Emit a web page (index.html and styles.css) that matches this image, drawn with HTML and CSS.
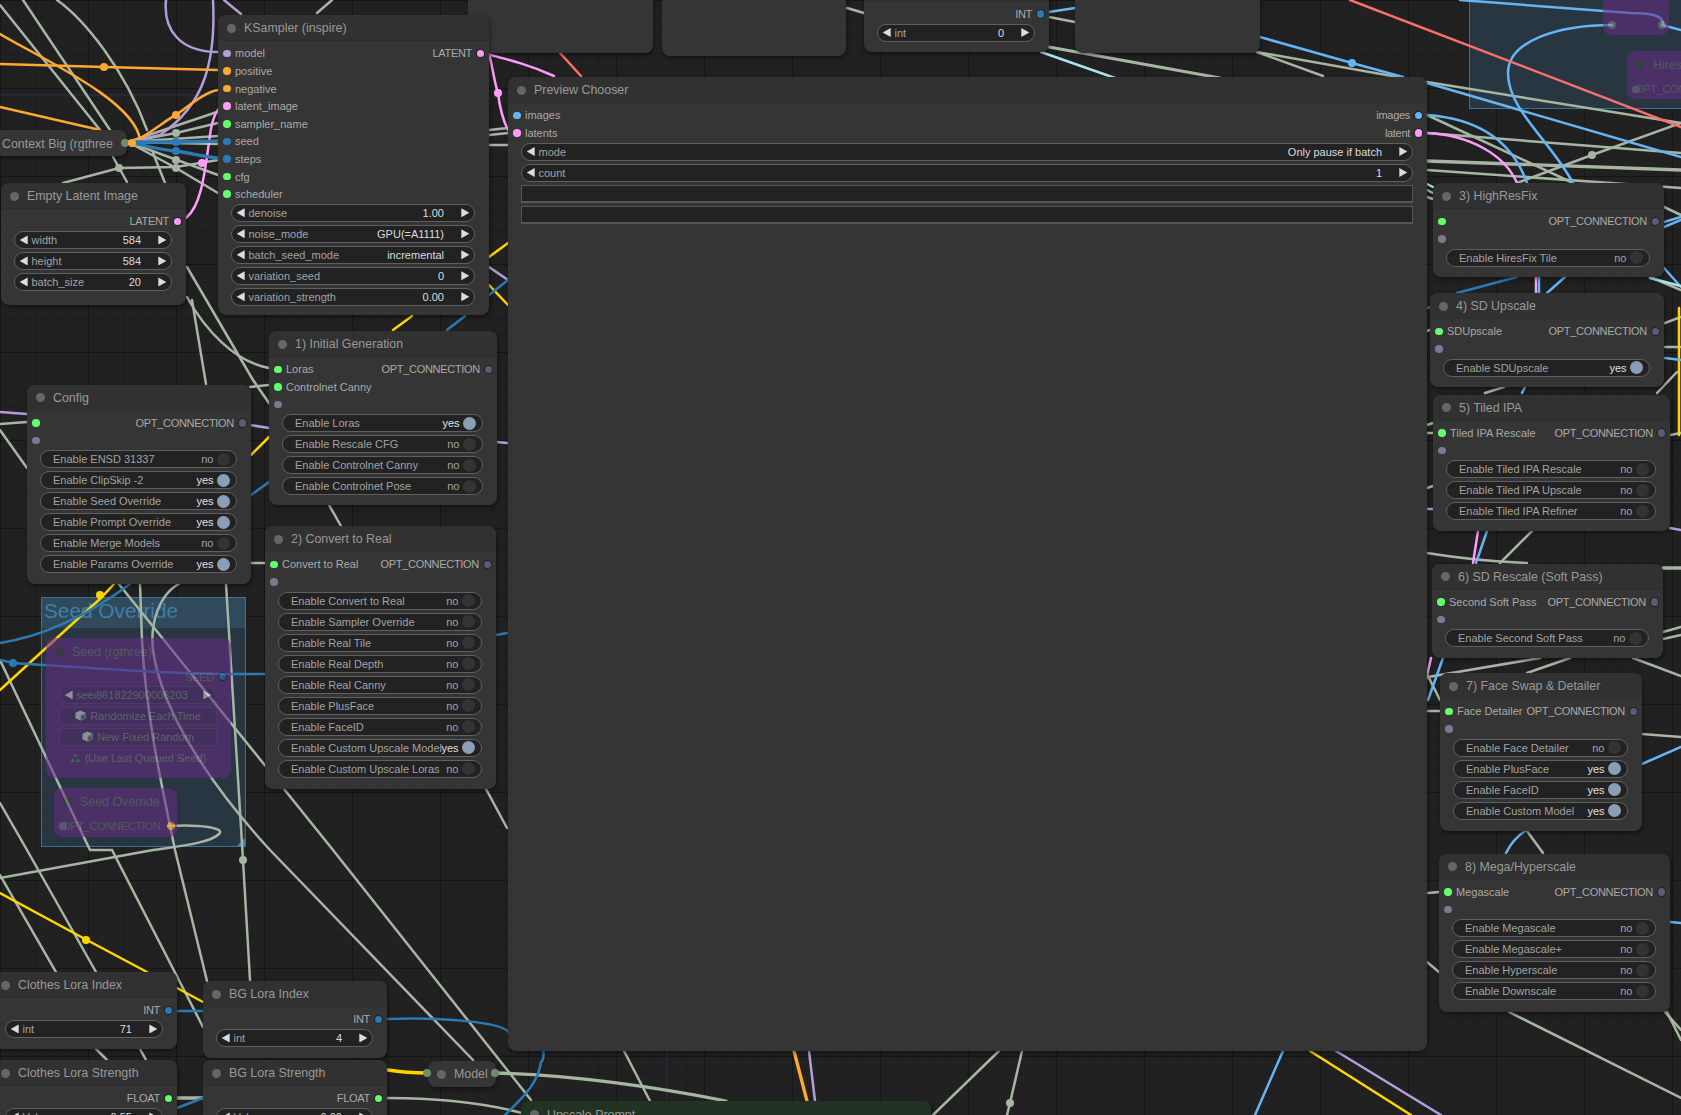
FILE: index.html
```html
<!DOCTYPE html>
<html lang="en">
<head>
<meta charset="utf-8">
<title>ComfyUI workflow</title>
<link rel="stylesheet" href="styles.css">
</head>
<body>
<main class="canvas">

<div class="group g-seed"><div class="group-title">Seed Override</div><span class="corner"></span></div>
<div class="group g-hires"></div>

<svg class="wires" width="1681" height="1115" viewBox="0 0 1681 1115">
  <g class="w navy">
    <path d="M0,95 L218,95"/>
    <path d="M667,1051 L667,1100"/>
  </g>
  <g class="w sage">
    <path d="M0,5 L100,130"/><path d="M23,0 L110,130"/><path d="M57,0 C85,20 125,70 147,130"/>
    <path d="M113,157 L127,182"/><path d="M153,153 L165,183"/>
    <path d="M128,142 L217,112"/><path d="M128,142 L176,133 L218,123"/><path d="M128,142 L218,136"/>
    <path d="M128,142 L218,144"/><path d="M128,142 L177,160 L218,175"/><path d="M128,142 L176,168 L218,193"/>
    <path d="M63,183 L119,168 L176,167 L218,160"/>
    <path d="M317,13 L332,0"/>
    <path d="M489,130 L508,128"/><path d="M489,135 L508,133"/><path d="M489,145 L508,145"/>
    <path d="M187,267 L253,380 L269,403"/><path d="M187,297 C205,330 235,362 269,368"/><path d="M192,300 L206,384"/>
    <path d="M250,387 L269,385"/>
    <path d="M0,424 L27,422"/><path d="M0,430 L27,468"/>
    <path d="M251,563 L265,563"/><path d="M329,505 L341,526"/><path d="M486,789 L507,828"/>
    <path d="M118,583 L284,789 L333,850 L531,1100"/>
    <path d="M140,584 L142,640 C146,720 165,800 175,850 L207,981"/>
    <path d="M180,583 C158,595 150,625 153,650 C162,715 215,790 270,850 L473,1060"/>
    <path d="M226,584 L243,860 L250,980"/>
    <path d="M0,660 L90,850 L112,850 L203,1027"/>
    <path d="M0,803 L27,850 L96,972"/>
    <path d="M168,826 C200,824 226,828 219,834 C210,843 180,846 153,850 L0,878"/>
    <path d="M0,875 L56,972"/>
    <path d="M96,1049 L107,1060"/><path d="M140,1049 L146,1060"/>
    <path d="M177,1098 L203,1098" class="thick"/>
    <path d="M387,1098 C430,1098 480,1102 522,1113"/>
    <path d="M496,1073 C560,1075 640,1084 726,1101" class="thick"/>
    <path d="M624,1051 L650,1101"/>
    <path d="M999,1051 L933,1115"/>
    <path d="M1022,1051 L1010,1103 L1007,1115"/>
    <path d="M1509,1012 L1681,1098"/><path d="M1667,1012 L1681,1040"/>
    <path d="M847,8 L864,13"/><path d="M1049,17 L1075,22"/>
    <path d="M1049,47 L1220,78" class="thick"/>
    <path d="M1257,52 L1323,76"/><path d="M1257,52 L1403,78"/>
    <path d="M1427,82 L1681,123"/>
    <path d="M1427,115 L1573,183"/>
    <path d="M1427,133 L1681,153"/>
    <path d="M1427,161 L1681,170" class="thick"/>
    <path d="M1427,170 L1681,188"/>
    <path d="M1517,183 L1592,155 L1681,123"/>
    <path d="M1664,207 L1681,215"/><path d="M1665,323 L1681,317"/><path d="M1665,347 L1681,347"/>
    <path d="M1657,393 L1677,372"/><path d="M1485,393 L1504,387"/>
    <path d="M1427,190 L1433,193"/><path d="M1427,197 L1433,199"/>
    <path d="M1427,331 L1430,330"/>
    <path d="M1427,425 L1433,423"/><path d="M1427,433 L1433,433"/><path d="M1427,488 L1433,486"/>
    <path d="M1532,531 L1500,563"/>
    <path d="M1427,553 C1470,560 1500,562 1527,563"/>
    <path d="M1663,568 L1681,568" class="thick"/>
    <path d="M1663,632 L1681,627"/><path d="M1663,639 L1681,635"/>
    <path d="M1633,658 L1681,676"/>
    <path d="M1428,677 L1540,658"/><path d="M1527,673 L1570,658"/>
    <path d="M1428,676 L1440,700"/><path d="M1428,711 L1440,711"/>
    <path d="M1642,734 L1681,737"/>
    <path d="M1527,831 L1543,853"/>
    <path d="M1428,893 L1439,892"/><path d="M1427,962 L1439,972"/>
    <path d="M1665,1012 L1681,1030"/>
    <path d="M1670,435 L1681,433"/>
    <path d="M1650,277 L1681,290"/>
  </g>
  <g class="w purple">
    <path d="M166,0 C163,30 180,52 218,52"/>
    <path d="M213,0 C216,60 205,105 160,135 L130,142"/>
    <path d="M224,0 L241,14"/>
    <path d="M489,267 L508,280"/>
    <path d="M0,412 L27,414"/><path d="M250,425 L269,428"/><path d="M497,442 L507,443"/>
    <path d="M1427,509 L1433,509"/><path d="M1670,528 L1681,530"/>
    <path d="M809,1051 L815,1101"/>
    <path d="M1336,1051 L1441,1115"/>
  </g>
  <g class="w orange">
    <path d="M0,64 L104,67 L218,70"/>
    <path d="M0,34 C40,58 135,100 140,140"/>
    <path d="M0,107 L100,130"/>
    <path d="M132,142 C150,135 165,120 176,115 C190,105 205,92 218,90"/>
    <path d="M794,1051 L807,1101" class="thick"/>
  </g>
  <g class="w pink">
    <path d="M186,218 C202,205 205,170 210,135 C212,120 216,110 222,106"/>
    <path d="M483,53 C510,60 530,65 554,76"/>
    <path d="M489,53 C493,70 495,85 498,93 C500,110 503,120 508,130"/>
    <path d="M1427,133 C1470,135 1505,155 1517,183"/>
    <path d="M1536,277 L1536,293"/>
    <path d="M1478,531 L1473,563"/>
    <path d="M1431,658 L1426,680"/>
  </g>
  <g class="w yellow">
    <path d="M0,690 L82,615 L100,599 L114,584"/>
    <path d="M489,257 L508,243"/><path d="M489,285 L508,305"/>
    <path d="M393,330 L412,316"/><path d="M251,455 L269,437"/>
    <path d="M0,893 L85,939 L147,972"/><path d="M177,988 L203,1002"/>
    <path d="M388,1070 C400,1072 410,1073 428,1073" class="thick"/>
    <path d="M1310,1051 L1411,1115"/>
    <path d="M1679,308 L1679,435"/>
  </g>
  <g class="w blue">
    <path d="M130,142 L176,142 L218,141" class="thick"/>
    <path d="M130,142 C145,146 160,150 176,151 C190,153 205,157 218,158" class="thick"/>
    <path d="M489,295 L508,280"/><path d="M447,330 L465,316"/>
    <path d="M251,495 L269,482"/>
    <path d="M0,643 C50,635 95,610 130,584"/>
    <path d="M0,660 L13,663 C90,668 170,675 265,674"/>
    <path d="M177,1011 L203,1011"/>
    <path d="M388,1019 C440,1017 505,1022 509,1033"/>
    <path d="M509,1033 C550,1030 545,1060 541,1062 C538,1085 520,1100 505,1115"/>
    <path d="M177,1108 L203,1098"/>
    <path d="M496,635 L507,633"/>
    <path d="M1457,293 L1517,277"/><path d="M1427,308 L1431,307"/>
  </g>
  <g class="w sky">
    <path d="M1260,37 L1352,63 L1403,77"/>
    <path d="M1427,83 L1681,157"/>
    <path d="M1460,0 L1630,13 C1650,13 1664,15 1663,25"/>
    <path d="M1612,25 C1560,25 1508,40 1508,73 C1508,110 1550,140 1573,183"/>
    <path d="M1662,25 L1681,30"/>
    <path d="M1427,115 C1470,118 1510,135 1527,183"/>
    <path d="M1539,277 L1539,293"/><path d="M1547,293 L1565,277"/>
    <path d="M1522,393 L1525,387"/>
    <path d="M1487,531 L1476,563"/>
    <path d="M1443,658 L1428,700"/>
    <path d="M1664,227 L1681,220"/><path d="M1664,222 L1681,217"/>
    <path d="M1664,268 L1681,287"/><path d="M1665,358 L1681,360"/>
    <path d="M1642,764 L1681,747"/>
    <path d="M1506,853 C1510,845 1516,837 1525,831"/>
    <path d="M1670,922 L1681,923"/>
    <path d="M1283,1051 L1255,1115"/>
    <path d="M1049,12 L1075,8"/>
  </g>
  <g class="w cyan">
    <path d="M1041,52 L1115,78"/>
    <path d="M1427,184 L1433,187"/>
    <path d="M1650,278 L1681,286"/>
  </g>
  <g class="w red">
    <path d="M560,53 L581,76"/>
    <path d="M1350,0 L1681,127"/>
  </g>
  <g class="pts sage-f">
    <circle cx="176" cy="133" r="4"/><circle cx="176" cy="160" r="4"/><circle cx="176" cy="168" r="4"/><circle cx="119" cy="168" r="4"/>
    <circle cx="243" cy="860" r="4"/><circle cx="1010" cy="1103" r="4"/><circle cx="1592" cy="155" r="4"/>
  </g>
  <g class="pts orange-f"><circle cx="104" cy="67" r="4"/><circle cx="176" cy="115" r="4"/></g>
  <g class="pts pink-f"><circle cx="202" cy="163" r="4"/><circle cx="498" cy="93" r="4"/></g>
  <g class="pts yellow-f"><circle cx="100" cy="595" r="4"/><circle cx="86" cy="940" r="4"/></g>
  <g class="pts blue-f"><circle cx="176" cy="142" r="4"/><circle cx="176" cy="151" r="4"/><circle cx="13" cy="663" r="4"/></g>
  <g class="pts sky-f"><circle cx="1352" cy="63" r="4"/></g>
</svg>

<!-- partially visible nodes along the top edge -->
<section class="node n-top-a"></section>
<section class="node n-top-b"></section>
<section class="node n-top-c">
  <header class="title"></header>
  <div class="slots"><div class="row"><span class="in"></span><span class="out">INT<i class="dot int"></i></span></div></div>
  <div class="widgets"><div class="w-num"><span class="lbl">int</span><span class="val">0</span></div></div>
</section>
<section class="node n-top-d"></section>

<section class="node n-ksampler">
  <header class="title"><i class="tdot"></i>KSampler (inspire)</header>
  <div class="slots">
    <div class="row"><span class="in"><i class="dot model"></i>model</span><span class="out">LATENT<i class="dot latent"></i></span></div>
    <div class="row"><span class="in"><i class="dot cond"></i>positive</span></div>
    <div class="row"><span class="in"><i class="dot cond"></i>negative</span></div>
    <div class="row"><span class="in"><i class="dot latent"></i>latent_image</span></div>
    <div class="row"><span class="in"><i class="dot green"></i>sampler_name</span></div>
    <div class="row"><span class="in"><i class="dot int"></i>seed</span></div>
    <div class="row"><span class="in"><i class="dot int"></i>steps</span></div>
    <div class="row"><span class="in"><i class="dot green"></i>cfg</span></div>
    <div class="row"><span class="in"><i class="dot green"></i>scheduler</span></div>
  </div>
  <div class="widgets">
    <div class="w-num"><span class="lbl">denoise</span><span class="val">1.00</span></div>
    <div class="w-num"><span class="lbl">noise_mode</span><span class="val">GPU(=A1111)</span></div>
    <div class="w-num"><span class="lbl">batch_seed_mode</span><span class="val">incremental</span></div>
    <div class="w-num"><span class="lbl">variation_seed</span><span class="val">0</span></div>
    <div class="w-num"><span class="lbl">variation_strength</span><span class="val">0.00</span></div>
  </div>
</section>

<section class="node n-context"><span class="cname">Context Big (rgthree</span><i class="cslot c-a"></i><i class="cslot c-b"></i></section>

<section class="node n-latent">
  <header class="title"><i class="tdot"></i>Empty Latent Image</header>
  <div class="slots"><div class="row"><span class="in"></span><span class="out">LATENT<i class="dot latent"></i></span></div></div>
  <div class="widgets">
    <div class="w-num"><span class="lbl">width</span><span class="val">584</span></div>
    <div class="w-num"><span class="lbl">height</span><span class="val">584</span></div>
    <div class="w-num"><span class="lbl">batch_size</span><span class="val">20</span></div>
  </div>
</section>

<section class="node n-init">
  <header class="title"><i class="tdot"></i>1) Initial Generation</header>
  <div class="slots">
    <div class="row"><span class="in"><i class="dot green"></i>Loras</span><span class="out">OPT_CONNECTION<i class="dot opt"></i></span></div>
    <div class="row"><span class="in"><i class="dot green"></i>Controlnet Canny</span></div>
    <div class="row"><span class="in"><i class="dot opt-in"></i></span></div>
  </div>
  <div class="widgets">
    <div class="w-tog on"><span class="lbl">Enable Loras</span><span class="val">yes</span><i class="knob"></i></div>
    <div class="w-tog"><span class="lbl">Enable Rescale CFG</span><span class="val">no</span><i class="knob"></i></div>
    <div class="w-tog"><span class="lbl">Enable Controlnet Canny</span><span class="val">no</span><i class="knob"></i></div>
    <div class="w-tog"><span class="lbl">Enable Controlnet Pose</span><span class="val">no</span><i class="knob"></i></div>
  </div>
</section>

<section class="node n-config">
  <header class="title"><i class="tdot"></i>Config</header>
  <div class="slots">
    <div class="row"><span class="in"><i class="dot green"></i></span><span class="out">OPT_CONNECTION<i class="dot opt"></i></span></div>
    <div class="row"><span class="in"><i class="dot opt-in"></i></span></div>
  </div>
  <div class="widgets">
    <div class="w-tog"><span class="lbl">Enable ENSD 31337</span><span class="val">no</span><i class="knob"></i></div>
    <div class="w-tog on"><span class="lbl">Enable ClipSkip -2</span><span class="val">yes</span><i class="knob"></i></div>
    <div class="w-tog on"><span class="lbl">Enable Seed Override</span><span class="val">yes</span><i class="knob"></i></div>
    <div class="w-tog on"><span class="lbl">Enable Prompt Override</span><span class="val">yes</span><i class="knob"></i></div>
    <div class="w-tog"><span class="lbl">Enable Merge Models</span><span class="val">no</span><i class="knob"></i></div>
    <div class="w-tog on"><span class="lbl">Enable Params Override</span><span class="val">yes</span><i class="knob"></i></div>
  </div>
</section>

<section class="node n-convert">
  <header class="title"><i class="tdot"></i>2) Convert to Real</header>
  <div class="slots">
    <div class="row"><span class="in"><i class="dot green"></i>Convert to Real</span><span class="out">OPT_CONNECTION<i class="dot opt"></i></span></div>
    <div class="row"><span class="in"><i class="dot opt-in"></i></span></div>
  </div>
  <div class="widgets">
    <div class="w-tog"><span class="lbl">Enable Convert to Real</span><span class="val">no</span><i class="knob"></i></div>
    <div class="w-tog"><span class="lbl">Enable Sampler Override</span><span class="val">no</span><i class="knob"></i></div>
    <div class="w-tog"><span class="lbl">Enable Real Tile</span><span class="val">no</span><i class="knob"></i></div>
    <div class="w-tog"><span class="lbl">Enable Real Depth</span><span class="val">no</span><i class="knob"></i></div>
    <div class="w-tog"><span class="lbl">Enable Real Canny</span><span class="val">no</span><i class="knob"></i></div>
    <div class="w-tog"><span class="lbl">Enable PlusFace</span><span class="val">no</span><i class="knob"></i></div>
    <div class="w-tog"><span class="lbl">Enable FaceID</span><span class="val">no</span><i class="knob"></i></div>
    <div class="w-tog on"><span class="lbl">Enable Custom Upscale Model</span><span class="val">yes</span><i class="knob"></i></div>
    <div class="w-tog"><span class="lbl">Enable Custom Upscale Loras</span><span class="val">no</span><i class="knob"></i></div>
  </div>
</section>

<section class="node muted n-seed">
  <header class="title"><i class="tdot"></i>Seed (rgthree)</header>
  <div class="slots"><div class="row"><span class="in"></span><span class="out">SEED<i class="dot int"></i></span></div></div>
  <div class="widgets">
    <div class="w-num seed"><span class="lbl">seed</span><span class="val">861822900006203</span></div>
    <div class="btn"><svg class="cube" viewBox="0 0 12 12"><path d="M6 0.5 L11.5 3 L11.5 9 L6 11.5 L0.5 9 L0.5 3 Z" fill="#ddd"/><path d="M6 6 L11.5 3 L11.5 9 L6 11.5 Z" fill="#8a8a9a"/><circle cx="8.8" cy="7.8" r="1" fill="#222"/></svg>Randomize Each Time</div>
    <div class="btn"><svg class="cube" viewBox="0 0 12 12"><path d="M6 0.5 L11.5 3 L11.5 9 L6 11.5 L0.5 9 L0.5 3 Z" fill="#ddd"/><path d="M6 6 L11.5 3 L11.5 9 L6 11.5 Z" fill="#8a8a9a"/><circle cx="8.8" cy="7.8" r="1" fill="#222"/></svg>New Fixed Random</div>
    <div class="btn plain"><svg class="cube" viewBox="0 0 12 12"><path d="M6 1 L8.5 5 L3.5 5 Z M3 6.5 L5.5 11 L0.5 11 Z M9 6.5 L11.5 11 L6.5 11 Z" fill="#4f8f6f"/></svg>(Use Last Queued Seed)</div>
  </div>
</section>

<section class="node muted n-sover">
  <header class="title"><i class="tdot"></i>Seed Override</header>
  <div class="slots"><div class="row tight"><i class="dot opt-in"></i>OPT_CONNECTION<i class="dot cond"></i></div></div>
</section>

<section class="node muted n-hires-a"><i class="cslot h-l"></i><i class="cslot h-r"></i></section>
<section class="node muted n-hires-b">
  <header class="title"><i class="tdot"></i>Hires</header>
  <div class="slots"><div class="row tight"><i class="dot opt-in"></i>OPT_CONNECTION</div></div>
</section>

<section class="node n-preview">
  <header class="title"><i class="tdot"></i>Preview Chooser</header>
  <div class="slots">
    <div class="row"><span class="in"><i class="dot sky"></i>images</span><span class="out">images<i class="dot sky"></i></span></div>
    <div class="row"><span class="in"><i class="dot latent"></i>latents</span><span class="out">latent<i class="dot latent"></i></span></div>
  </div>
  <div class="widgets">
    <div class="w-num"><span class="lbl">mode</span><span class="val">Only pause if batch</span></div>
    <div class="w-num"><span class="lbl">count</span><span class="val">1</span></div>
    <div class="box"></div>
    <div class="box"></div>
  </div>
</section>

<section class="node n-s3">
  <header class="title"><i class="tdot"></i>3) HighResFix</header>
  <div class="slots">
    <div class="row"><span class="in"><i class="dot green"></i></span><span class="out">OPT_CONNECTION<i class="dot opt"></i></span></div>
    <div class="row"><span class="in"><i class="dot opt-in"></i></span></div>
  </div>
  <div class="widgets">
    <div class="w-tog"><span class="lbl">Enable HiresFix Tile</span><span class="val">no</span><i class="knob"></i></div>
  </div>
</section>

<section class="node n-s4">
  <header class="title"><i class="tdot"></i>4) SD Upscale</header>
  <div class="slots">
    <div class="row"><span class="in"><i class="dot green"></i>SDUpscale</span><span class="out">OPT_CONNECTION<i class="dot opt"></i></span></div>
    <div class="row"><span class="in"><i class="dot opt-in"></i></span></div>
  </div>
  <div class="widgets">
    <div class="w-tog on"><span class="lbl">Enable SDUpscale</span><span class="val">yes</span><i class="knob"></i></div>
  </div>
</section>

<section class="node n-s5">
  <header class="title"><i class="tdot"></i>5) Tiled IPA</header>
  <div class="slots">
    <div class="row"><span class="in"><i class="dot green"></i>Tiled IPA Rescale</span><span class="out">OPT_CONNECTION<i class="dot opt"></i></span></div>
    <div class="row"><span class="in"><i class="dot opt-in"></i></span></div>
  </div>
  <div class="widgets">
    <div class="w-tog"><span class="lbl">Enable Tiled IPA Rescale</span><span class="val">no</span><i class="knob"></i></div>
    <div class="w-tog"><span class="lbl">Enable Tiled IPA Upscale</span><span class="val">no</span><i class="knob"></i></div>
    <div class="w-tog"><span class="lbl">Enable Tiled IPA Refiner</span><span class="val">no</span><i class="knob"></i></div>
  </div>
</section>

<section class="node n-s6">
  <header class="title"><i class="tdot"></i>6) SD Rescale (Soft Pass)</header>
  <div class="slots">
    <div class="row"><span class="in"><i class="dot green"></i>Second Soft Pass</span><span class="out">OPT_CONNECTION<i class="dot opt"></i></span></div>
    <div class="row"><span class="in"><i class="dot opt-in"></i></span></div>
  </div>
  <div class="widgets">
    <div class="w-tog"><span class="lbl">Enable Second Soft Pass</span><span class="val">no</span><i class="knob"></i></div>
  </div>
</section>

<section class="node n-s7">
  <header class="title"><i class="tdot"></i>7) Face Swap &amp; Detailer</header>
  <div class="slots">
    <div class="row"><span class="in"><i class="dot green"></i>Face Detailer</span><span class="out">OPT_CONNECTION<i class="dot opt"></i></span></div>
    <div class="row"><span class="in"><i class="dot opt-in"></i></span></div>
  </div>
  <div class="widgets">
    <div class="w-tog"><span class="lbl">Enable Face Detailer</span><span class="val">no</span><i class="knob"></i></div>
    <div class="w-tog on"><span class="lbl">Enable PlusFace</span><span class="val">yes</span><i class="knob"></i></div>
    <div class="w-tog on"><span class="lbl">Enable FaceID</span><span class="val">yes</span><i class="knob"></i></div>
    <div class="w-tog on"><span class="lbl">Enable Custom Model</span><span class="val">yes</span><i class="knob"></i></div>
  </div>
</section>

<section class="node n-s8">
  <header class="title"><i class="tdot"></i>8) Mega/Hyperscale</header>
  <div class="slots">
    <div class="row"><span class="in"><i class="dot green"></i>Megascale</span><span class="out">OPT_CONNECTION<i class="dot opt"></i></span></div>
    <div class="row"><span class="in"><i class="dot opt-in"></i></span></div>
  </div>
  <div class="widgets">
    <div class="w-tog"><span class="lbl">Enable Megascale</span><span class="val">no</span><i class="knob"></i></div>
    <div class="w-tog"><span class="lbl">Enable Megascale+</span><span class="val">no</span><i class="knob"></i></div>
    <div class="w-tog"><span class="lbl">Enable Hyperscale</span><span class="val">no</span><i class="knob"></i></div>
    <div class="w-tog"><span class="lbl">Enable Downscale</span><span class="val">no</span><i class="knob"></i></div>
  </div>
</section>

<section class="node n-cl-idx">
  <header class="title"><i class="tdot"></i>Clothes Lora Index</header>
  <div class="slots"><div class="row"><span class="in"></span><span class="out">INT<i class="dot int"></i></span></div></div>
  <div class="widgets"><div class="w-num"><span class="lbl">int</span><span class="val">71</span></div></div>
</section>
<section class="node n-bg-idx">
  <header class="title"><i class="tdot"></i>BG Lora Index</header>
  <div class="slots"><div class="row"><span class="in"></span><span class="out">INT<i class="dot int"></i></span></div></div>
  <div class="widgets"><div class="w-num"><span class="lbl">int</span><span class="val">4</span></div></div>
</section>
<section class="node n-cl-str">
  <header class="title"><i class="tdot"></i>Clothes Lora Strength</header>
  <div class="slots"><div class="row"><span class="in"></span><span class="out">FLOAT<i class="dot green"></i></span></div></div>
  <div class="widgets"><div class="w-num"><span class="lbl">Value</span><span class="val">0.55</span></div></div>
</section>
<section class="node n-bg-str">
  <header class="title"><i class="tdot"></i>BG Lora Strength</header>
  <div class="slots"><div class="row"><span class="in"></span><span class="out">FLOAT<i class="dot green"></i></span></div></div>
  <div class="widgets"><div class="w-num"><span class="lbl">Value</span><span class="val">0.00</span></div></div>
</section>

<section class="node n-model"><i class="tdot"></i><span class="cname">Model</span><i class="cslot m-l"></i><i class="cslot m-r"></i></section>

<section class="node n-upscale">
  <header class="title"><i class="tdot"></i>Upscale Prompt</header>
</section>

</main>
</body>
</html>
```

FILE: styles.css
```css
* { box-sizing: border-box; }
html, body { margin: 0; padding: 0; background: #202020; }
body { width: 1681px; height: 1115px; overflow: hidden; font-family: "Liberation Sans", Arial, sans-serif; }

.canvas {
  position: relative;
  width: 1681px;
  height: 1115px;
  overflow: hidden;
  background-color: #212121;
  background-image:
    linear-gradient(to right, rgba(0,0,0,.28) 1px, transparent 1px),
    linear-gradient(to bottom, rgba(0,0,0,.28) 1px, transparent 1px),
    linear-gradient(to right, rgba(0,0,0,.13) 1px, transparent 1px),
    linear-gradient(to bottom, rgba(0,0,0,.13) 1px, transparent 1px);
  background-size: 88px 88px, 88px 88px, 17.6px 17.6px, 17.6px 17.6px;
}

/* Groups */
.group {
  position: absolute;
  background: #273640;
  border: 1px solid #3a6f96;
}
.group-title {
  height: 30px;
  padding-left: 2px;
  background: #30495b;
  color: #3f7fa8;
  font-size: 20.8px;
  line-height: 26px;
}
.corner {
  position: absolute;
  right: 0;
  bottom: 0;
  width: 0;
  height: 0;
  border-style: solid;
  border-width: 0 0 8px 8px;
  border-color: transparent transparent #3f7fa8 transparent;
}
.g-seed { left: 41px; top: 597px; width: 205px; height: 250px; }
.g-hires { left: 1469px; top: -40px; width: 260px; height: 149px; }

/* Wires */
.wires { position: absolute; left: 0; top: 0; }
.w { fill: none; stroke-width: 2.5; stroke-linecap: round; }
.w .thick { stroke-width: 3.3; }
.navy { stroke: #262d3d; stroke-width: 1.5; }
.sage { stroke: #a6b6a3; }
.purple { stroke: #b39ddb; }
.orange { stroke: #ffa931; }
.pink { stroke: #ff9cf9; }
.yellow { stroke: #ffd500; }
.blue { stroke: #2a7ab4; }
.sky { stroke: #64b5f6; }
.cyan { stroke: #a8e4ec; }
.red { stroke: #ff6e6e; }
.sage-f { fill: #a6b6a3; }
.orange-f { fill: #ffa931; }
.pink-f { fill: #ff9cf9; }
.yellow-f { fill: #ffd500; }
.blue-f { fill: #2a7ab4; }
.sky-f { fill: #64b5f6; }

/* Nodes */
.node {
  position: absolute;
  display: flex;
  flex-direction: column;
  background: #353535;
  border-radius: 8px;
  box-shadow: 1px 2px 4px rgba(0,0,0,.45);
  color: #aaa;
  font-size: 11px;
}
.title {
  display: flex;
  align-items: center;
  flex: none;
  height: 26.4px;
  padding: 1px 0 0 8.5px;
  background: #313131;
  border-bottom: 1px solid #2e2e2e;
  border-radius: 8px 8px 0 0;
  color: #999;
  font-size: 12.4px;
}
.tdot {
  flex: none;
  width: 9px;
  height: 9px;
  margin-right: 8.5px;
  border-radius: 50%;
  background: #666;
}
.slots { flex: none; padding: 3.2px 5px 0; }
.row { display: flex; justify-content: space-between; align-items: center; height: 17.6px; }
.row.tight { justify-content: flex-start; letter-spacing: -.3px; }
.in, .out { display: flex; align-items: center; white-space: nowrap; }
.out { letter-spacing: -.3px; }
.dot {
  flex: none;
  display: block;
  width: 7.5px;
  height: 7.5px;
  border-radius: 50%;
  background: #888;
}
.in .dot { margin-right: 4.5px; }
.out .dot { margin-left: 4.5px; box-shadow: 0 0 0 1px #222; }
.model { background: #b39ddb; }
.latent { background: #ff9cf9; }
.cond { background: #ffa931; }
.green { background: #64ff6e; }
.int { background: #2a7ab4; }
.dot.sky { background: #64b5f6; }
.opt { background: #5d5a74; }
.opt-in { background: #7b7892; }

.widgets { flex: none; display: flex; flex-direction: column; gap: 3px; padding: .8px 14px 0 13px; }
.w-num, .w-tog {
  position: relative;
  display: flex;
  align-items: center;
  height: 18px;
  flex: none;
  background: #222;
  border: 1px solid #5f5f5f;
  border-radius: 9px;
  white-space: nowrap;
}
.lbl { flex: 1 1 auto; min-width: 0; color: #a3a3a3; }
.val { flex: none; color: #dcdcdc; }
.w-num { padding: 0 30px 0 16.5px; }
.w-num::before, .w-num::after {
  content: "";
  position: absolute;
  top: 3.5px;
  width: 8px;
  height: 9px;
  background: #ddd;
}
.w-num::before { left: 4.7px; clip-path: polygon(0 50%, 100% 0, 100% 100%); }
.w-num::after { right: 4.7px; clip-path: polygon(0 0, 100% 50%, 0 100%); }
.w-tog { padding: 0 6.5px 0 12px; }
.w-tog .val { color: #a3a3a3; margin-right: 3px; }
.w-tog.on .val { color: #e0e0e0; }
.knob { flex: none; width: 13px; height: 13px; border-radius: 50%; background: #333; }
.w-tog.on .knob { background: #8a9fb5; }
.box { flex: none; height: 18px; background: #222; border: 1px solid #555; border-width: 1px 1px 2px 1px; }

/* Node placement on the canvas */
.n-top-a { left: 468px; top: -30px; width: 185px; height: 83px; }
.n-top-b { left: 662px; top: -30px; width: 184px; height: 86px; }
.n-top-c { left: 864px; top: -24.4px; width: 185px; height: 76px; }
.n-top-d { left: 1075px; top: -30px; width: 185px; height: 83px; }
.n-ksampler { left: 218px; top: 15px; width: 271px; height: 300px; }
.n-context { left: -40px; top: 130px; width: 167px; height: 26px; flex-direction: row; align-items: center; padding: 1px 0 0 42px; }
.n-latent { left: 1px; top: 183px; width: 185px; height: 122px; }
.n-init { left: 269px; top: 331px; width: 228px; height: 174px; }
.n-config { left: 27px; top: 384.6px; width: 224px; height: 199.4px; }
.n-convert { left: 265px; top: 526px; width: 231px; height: 263px; }
.n-preview { left: 508px; top: 77px; width: 919px; height: 974px; }
.n-s3 { left: 1433px; top: 183px; width: 231px; height: 94px; }
.n-s4 { left: 1430px; top: 293px; width: 234px; height: 94px; }
.n-s5 { left: 1433px; top: 394.6px; width: 237px; height: 136.4px; }
.n-s6 { left: 1432px; top: 563.6px; width: 231px; height: 94.4px; }
.n-s7 { left: 1440px; top: 673px; width: 202px; height: 158px; }
.n-s8 { left: 1439px; top: 853.6px; width: 231px; height: 158.4px; }
.n-cl-idx { left: -8px; top: 972px; width: 185px; height: 77px; }
.n-bg-idx { left: 203px; top: 981px; width: 184px; height: 77px; }
.n-cl-str { left: -8px; top: 1060px; width: 185px; height: 80px; }
.n-bg-str { left: 203px; top: 1060px; width: 184px; height: 80px; }
.n-model { left: 428px; top: 1061px; width: 68px; height: 26px; flex-direction: row; align-items: center; padding-left: 8.5px; }
.n-upscale { left: 521px; top: 1101px; width: 410px; height: 40px; background: #233323; }
.n-upscale .title { background: #233323; border-bottom: 0; }

.cname { color: #999; font-size: 12.4px; white-space: nowrap; }
.cslot { position: absolute; width: 8px; height: 8px; border-radius: 50%; background: #6f8c6c; top: 9px; }
.c-a { right: -2px; }
.c-b { right: -9px; background: #ffa931; }
.m-l { left: -5px; top: 8px; }
.m-r { right: -3px; top: 8px; }

/* Muted (bypassed) nodes inside groups */
.muted { background: #6a2a88; opacity: .55; box-shadow: none; color: #777; }
.muted .title { background: transparent; border-bottom: 0; color: #777; }
.muted .tdot { background: #444; }
.muted .lbl, .muted .val { color: #888; }
.n-seed { left: 46px; top: 638px; width: 185px; height: 140px; }
.n-seed .w-num { background: #5a2a76; border-color: #6b4080; padding: 0 30px 0 16px; }
.n-seed .lbl { flex: none; width: 20px; overflow: hidden; }
.n-seed .val { flex: 1; text-align: left; }
.n-seed .slots { padding-top: 3.5px; }
.n-seed .widgets { padding-top: .5px; }
.btn {
  display: flex;
  align-items: center;
  justify-content: center;
  gap: 4px;
  flex: none;
  height: 18px;
  background: #5a2a76;
  border: 1px solid #6b4080;
  color: #888;
  white-space: nowrap;
}
.btn.plain { background: transparent; border-color: transparent; }
.cube { width: 11px; height: 11px; flex: none; }
.n-sover { left: 54px; top: 788px; width: 123px; height: 49px; }
.n-sover .slots { padding: 3px 4px 0 5px; }
.n-sover .row .dot.opt-in { margin-right: -4.5px; }
.n-sover .row .dot.cond { margin-left: 7px; }
.n-hires-a { left: 1603px; top: -30px; width: 66px; height: 65px; }
.h-l { left: 5px; top: 51px; background: #888; }
.h-r { left: 55px; top: 51px; background: #888; }
.n-hires-b { left: 1627px; top: 51px; width: 120px; height: 48px; }
.n-hires-b .row .dot.opt-in { margin-right: -4.5px; }
```
